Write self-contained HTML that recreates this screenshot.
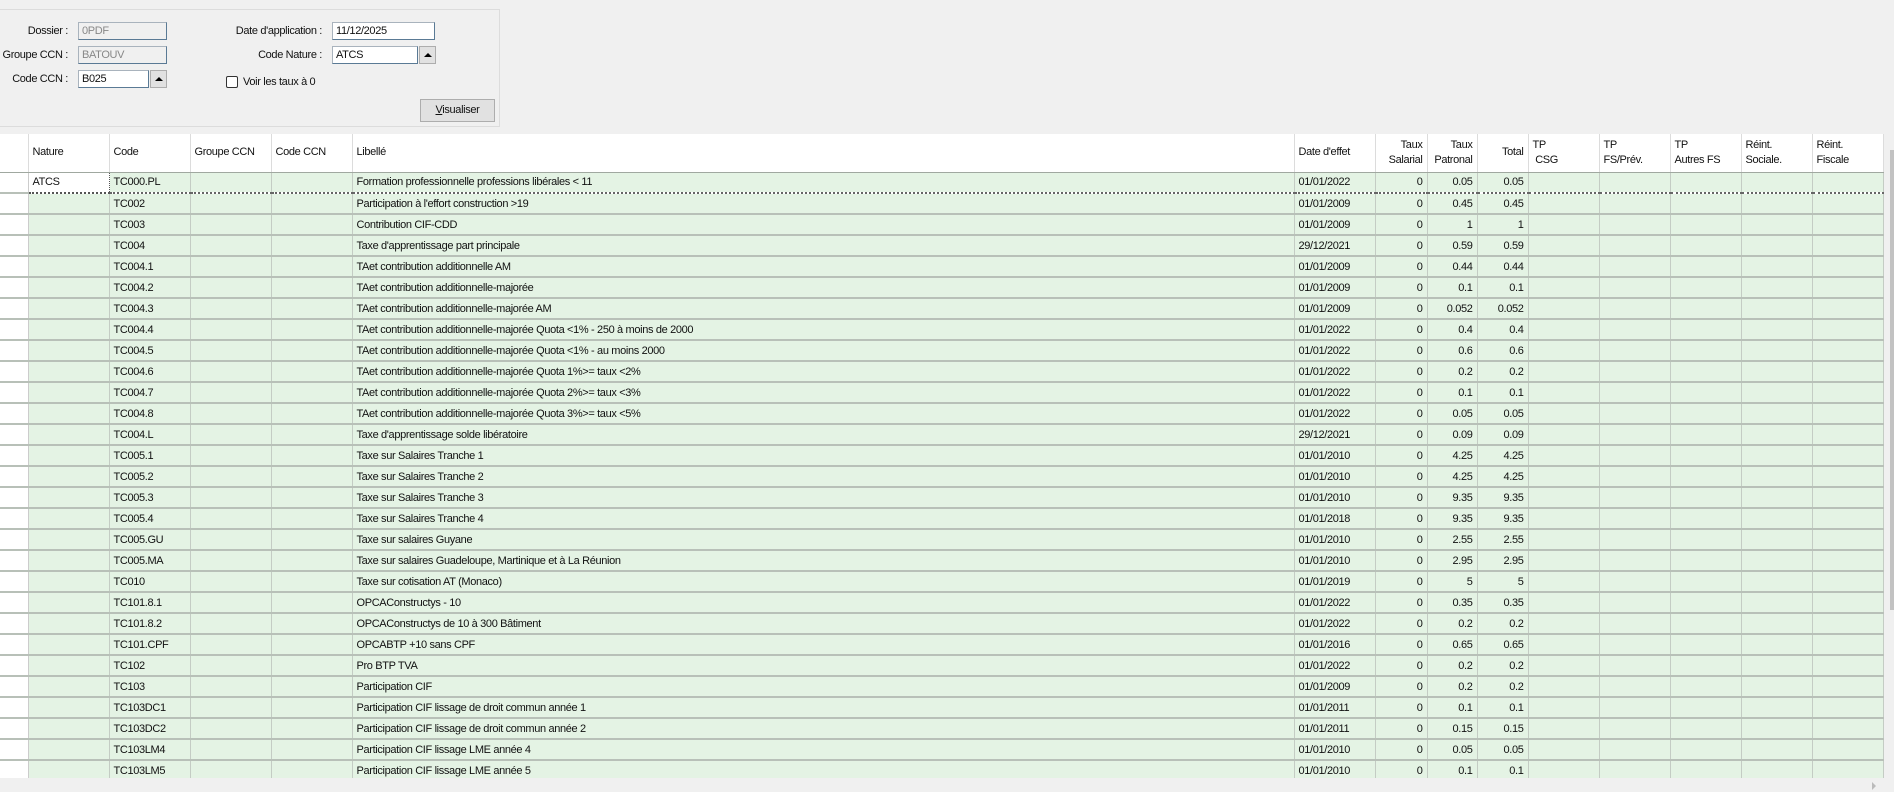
<!DOCTYPE html>
<html><head><meta charset="utf-8"><style>
*{margin:0;padding:0;box-sizing:border-box}
body{width:1894px;height:792px;background:#f0f0f0;font-family:"Liberation Sans",sans-serif;font-size:11px;color:#111;position:relative;overflow:hidden;letter-spacing:-0.35px}
.a{position:absolute}
.lbl{position:absolute;text-align:right;line-height:19px}
.in{position:absolute;height:18px;background:#fff;border:1px solid #a9b3bd;border-bottom:1px solid #5a7a95;border-right:1px solid #5a7a95;padding-left:3px;line-height:17px}
.in.dis{background:#f0f0f0;color:#888}
.btn{position:absolute;width:17px;height:18px;background:#e1e1e1;border:1px solid #adadad}
.btn:after{content:"";position:absolute;left:4px;top:6px;border-left:4px solid transparent;border-right:4px solid transparent;border-bottom:4px solid #000}
table{position:absolute;left:0;top:134px;border-collapse:collapse;table-layout:fixed;background:#fff}
td,th{overflow:hidden;white-space:nowrap;padding:0 4px;font-weight:normal}
th{height:38px;text-align:left;border-right:1px solid #dcdcdc;border-bottom:1px solid #a0a8a0;vertical-align:middle;line-height:15px}
td{height:21px;background:#e4f3e4;border-right:1px solid #c4ccc4;border-bottom:2px solid #b8c0b8;line-height:18px}
td:first-child{background:#fff;border-right:1px solid #ccc}
td.r,th.r{text-align:right}
tr.f td{border-top:1px dotted #666;border-bottom:2px dotted #666}
tr.f td:first-child{border-top:1px solid #a0a8a0;border-bottom:2px solid #b8c0b8}
tr.f td.w{background:#fff;border:1px dotted #555;border-bottom:2px dotted #555}
</style></head><body>
<div class="a" style="left:0;top:9px;width:500px;height:118px;border:1px solid #dcdcdc;border-left:none"></div>
<div class="lbl" style="left:0;width:68px;top:22px">Dossier :</div>
<div class="in dis" style="left:78px;top:22px;width:89px">0PDF</div>
<div class="lbl" style="left:0;width:68px;top:46px">Groupe CCN :</div>
<div class="in dis" style="left:78px;top:46px;width:89px">BATOUV</div>
<div class="lbl" style="left:0;width:68px;top:70px">Code CCN :</div>
<div class="in" style="left:78px;top:70px;width:71px">B025</div>
<div class="btn" style="left:150px;top:70px"></div>
<div class="lbl" style="left:200px;width:122px;top:22px">Date d'application :</div>
<div class="in" style="left:332px;top:22px;width:103px">11/12/2025</div>
<div class="lbl" style="left:200px;width:122px;top:46px">Code Nature :</div>
<div class="in" style="left:332px;top:46px;width:86px">ATCS</div>
<div class="btn" style="left:419px;top:46px"></div>
<div class="a" style="left:226px;top:76px;width:12px;height:12px;border:1px solid #333;border-radius:2px;background:#fff"></div>
<div class="a" style="left:243px;top:74px;line-height:16px">Voir les taux à 0</div>
<div class="a" style="left:420px;top:99px;width:75px;height:23px;background:#e1e1e1;border:1px solid #adadad;text-align:center;line-height:21px"><u>V</u>isualiser</div>
<table>
<colgroup><col style="width:28px"><col style="width:81px"><col style="width:81px"><col style="width:81px"><col style="width:81px"><col style="width:942px"><col style="width:81px"><col style="width:52px"><col style="width:50px"><col style="width:51px"><col style="width:71px"><col style="width:71px"><col style="width:71px"><col style="width:71px"><col style="width:71px"></colgroup>
<tr><th></th><th>Nature</th><th>Code</th><th>Groupe CCN</th><th>Code CCN</th><th>Libellé</th><th>Date d'effet</th><th class="r">Taux<br>Salarial</th><th class="r">Taux<br>Patronal</th><th class="r">Total</th><th>TP<br>&nbsp;CSG</th><th>TP<br>FS/Prév.</th><th>TP<br>Autres FS</th><th>Réint.<br>Sociale.</th><th>Réint.<br>Fiscale</th></tr>
<tr class="f"><td></td><td class="w">ATCS</td><td>TC000.PL</td><td></td><td></td><td>Formation professionnelle professions libérales &lt; 11</td><td>01/01/2022</td><td class="r">0</td><td class="r">0.05</td><td class="r">0.05</td><td></td><td></td><td></td><td></td><td></td></tr>
<tr><td></td><td></td><td>TC002</td><td></td><td></td><td>Participation à l'effort construction &gt;19</td><td>01/01/2009</td><td class="r">0</td><td class="r">0.45</td><td class="r">0.45</td><td></td><td></td><td></td><td></td><td></td></tr>
<tr><td></td><td></td><td>TC003</td><td></td><td></td><td>Contribution CIF-CDD</td><td>01/01/2009</td><td class="r">0</td><td class="r">1</td><td class="r">1</td><td></td><td></td><td></td><td></td><td></td></tr>
<tr><td></td><td></td><td>TC004</td><td></td><td></td><td>Taxe d'apprentissage part principale</td><td>29/12/2021</td><td class="r">0</td><td class="r">0.59</td><td class="r">0.59</td><td></td><td></td><td></td><td></td><td></td></tr>
<tr><td></td><td></td><td>TC004.1</td><td></td><td></td><td>TAet contribution additionnelle AM</td><td>01/01/2009</td><td class="r">0</td><td class="r">0.44</td><td class="r">0.44</td><td></td><td></td><td></td><td></td><td></td></tr>
<tr><td></td><td></td><td>TC004.2</td><td></td><td></td><td>TAet contribution additionnelle-majorée</td><td>01/01/2009</td><td class="r">0</td><td class="r">0.1</td><td class="r">0.1</td><td></td><td></td><td></td><td></td><td></td></tr>
<tr><td></td><td></td><td>TC004.3</td><td></td><td></td><td>TAet contribution additionnelle-majorée AM</td><td>01/01/2009</td><td class="r">0</td><td class="r">0.052</td><td class="r">0.052</td><td></td><td></td><td></td><td></td><td></td></tr>
<tr><td></td><td></td><td>TC004.4</td><td></td><td></td><td>TAet contribution additionnelle-majorée Quota &lt;1% - 250 à moins de 2000</td><td>01/01/2022</td><td class="r">0</td><td class="r">0.4</td><td class="r">0.4</td><td></td><td></td><td></td><td></td><td></td></tr>
<tr><td></td><td></td><td>TC004.5</td><td></td><td></td><td>TAet contribution additionnelle-majorée Quota &lt;1% - au moins 2000</td><td>01/01/2022</td><td class="r">0</td><td class="r">0.6</td><td class="r">0.6</td><td></td><td></td><td></td><td></td><td></td></tr>
<tr><td></td><td></td><td>TC004.6</td><td></td><td></td><td>TAet contribution additionnelle-majorée Quota 1%&gt;= taux &lt;2%</td><td>01/01/2022</td><td class="r">0</td><td class="r">0.2</td><td class="r">0.2</td><td></td><td></td><td></td><td></td><td></td></tr>
<tr><td></td><td></td><td>TC004.7</td><td></td><td></td><td>TAet contribution additionnelle-majorée Quota 2%&gt;= taux &lt;3%</td><td>01/01/2022</td><td class="r">0</td><td class="r">0.1</td><td class="r">0.1</td><td></td><td></td><td></td><td></td><td></td></tr>
<tr><td></td><td></td><td>TC004.8</td><td></td><td></td><td>TAet contribution additionnelle-majorée Quota 3%&gt;= taux &lt;5%</td><td>01/01/2022</td><td class="r">0</td><td class="r">0.05</td><td class="r">0.05</td><td></td><td></td><td></td><td></td><td></td></tr>
<tr><td></td><td></td><td>TC004.L</td><td></td><td></td><td>Taxe d'apprentissage solde libératoire</td><td>29/12/2021</td><td class="r">0</td><td class="r">0.09</td><td class="r">0.09</td><td></td><td></td><td></td><td></td><td></td></tr>
<tr><td></td><td></td><td>TC005.1</td><td></td><td></td><td>Taxe sur Salaires Tranche 1</td><td>01/01/2010</td><td class="r">0</td><td class="r">4.25</td><td class="r">4.25</td><td></td><td></td><td></td><td></td><td></td></tr>
<tr><td></td><td></td><td>TC005.2</td><td></td><td></td><td>Taxe sur Salaires Tranche 2</td><td>01/01/2010</td><td class="r">0</td><td class="r">4.25</td><td class="r">4.25</td><td></td><td></td><td></td><td></td><td></td></tr>
<tr><td></td><td></td><td>TC005.3</td><td></td><td></td><td>Taxe sur Salaires Tranche 3</td><td>01/01/2010</td><td class="r">0</td><td class="r">9.35</td><td class="r">9.35</td><td></td><td></td><td></td><td></td><td></td></tr>
<tr><td></td><td></td><td>TC005.4</td><td></td><td></td><td>Taxe sur Salaires Tranche 4</td><td>01/01/2018</td><td class="r">0</td><td class="r">9.35</td><td class="r">9.35</td><td></td><td></td><td></td><td></td><td></td></tr>
<tr><td></td><td></td><td>TC005.GU</td><td></td><td></td><td>Taxe sur salaires Guyane</td><td>01/01/2010</td><td class="r">0</td><td class="r">2.55</td><td class="r">2.55</td><td></td><td></td><td></td><td></td><td></td></tr>
<tr><td></td><td></td><td>TC005.MA</td><td></td><td></td><td>Taxe sur salaires Guadeloupe, Martinique et à La Réunion</td><td>01/01/2010</td><td class="r">0</td><td class="r">2.95</td><td class="r">2.95</td><td></td><td></td><td></td><td></td><td></td></tr>
<tr><td></td><td></td><td>TC010</td><td></td><td></td><td>Taxe sur cotisation AT (Monaco)</td><td>01/01/2019</td><td class="r">0</td><td class="r">5</td><td class="r">5</td><td></td><td></td><td></td><td></td><td></td></tr>
<tr><td></td><td></td><td>TC101.8.1</td><td></td><td></td><td>OPCAConstructys - 10</td><td>01/01/2022</td><td class="r">0</td><td class="r">0.35</td><td class="r">0.35</td><td></td><td></td><td></td><td></td><td></td></tr>
<tr><td></td><td></td><td>TC101.8.2</td><td></td><td></td><td>OPCAConstructys de 10 à 300 Bâtiment</td><td>01/01/2022</td><td class="r">0</td><td class="r">0.2</td><td class="r">0.2</td><td></td><td></td><td></td><td></td><td></td></tr>
<tr><td></td><td></td><td>TC101.CPF</td><td></td><td></td><td>OPCABTP +10 sans CPF</td><td>01/01/2016</td><td class="r">0</td><td class="r">0.65</td><td class="r">0.65</td><td></td><td></td><td></td><td></td><td></td></tr>
<tr><td></td><td></td><td>TC102</td><td></td><td></td><td>Pro BTP TVA</td><td>01/01/2022</td><td class="r">0</td><td class="r">0.2</td><td class="r">0.2</td><td></td><td></td><td></td><td></td><td></td></tr>
<tr><td></td><td></td><td>TC103</td><td></td><td></td><td>Participation CIF</td><td>01/01/2009</td><td class="r">0</td><td class="r">0.2</td><td class="r">0.2</td><td></td><td></td><td></td><td></td><td></td></tr>
<tr><td></td><td></td><td>TC103DC1</td><td></td><td></td><td>Participation CIF lissage de droit commun année 1</td><td>01/01/2011</td><td class="r">0</td><td class="r">0.1</td><td class="r">0.1</td><td></td><td></td><td></td><td></td><td></td></tr>
<tr><td></td><td></td><td>TC103DC2</td><td></td><td></td><td>Participation CIF lissage de droit commun année 2</td><td>01/01/2011</td><td class="r">0</td><td class="r">0.15</td><td class="r">0.15</td><td></td><td></td><td></td><td></td><td></td></tr>
<tr><td></td><td></td><td>TC103LM4</td><td></td><td></td><td>Participation CIF lissage LME année 4</td><td>01/01/2010</td><td class="r">0</td><td class="r">0.05</td><td class="r">0.05</td><td></td><td></td><td></td><td></td><td></td></tr>
<tr><td></td><td></td><td>TC103LM5</td><td></td><td></td><td>Participation CIF lissage LME année 5</td><td>01/01/2010</td><td class="r">0</td><td class="r">0.1</td><td class="r">0.1</td><td></td><td></td><td></td><td></td><td></td></tr>
</table>
<div class="a" style="left:0;top:778px;width:1894px;height:14px;background:#f0f0f0"></div>
<div class="a" style="left:1884px;top:134px;width:10px;height:644px;background:#f0f0f0"></div>
<div class="a" style="left:1890px;top:150px;width:4px;height:460px;background:#c2c2c2"></div>
<div class="a" style="left:1872px;top:782px;border-top:4px solid transparent;border-bottom:4px solid transparent;border-left:4px solid #bbb"></div>
</body></html>
